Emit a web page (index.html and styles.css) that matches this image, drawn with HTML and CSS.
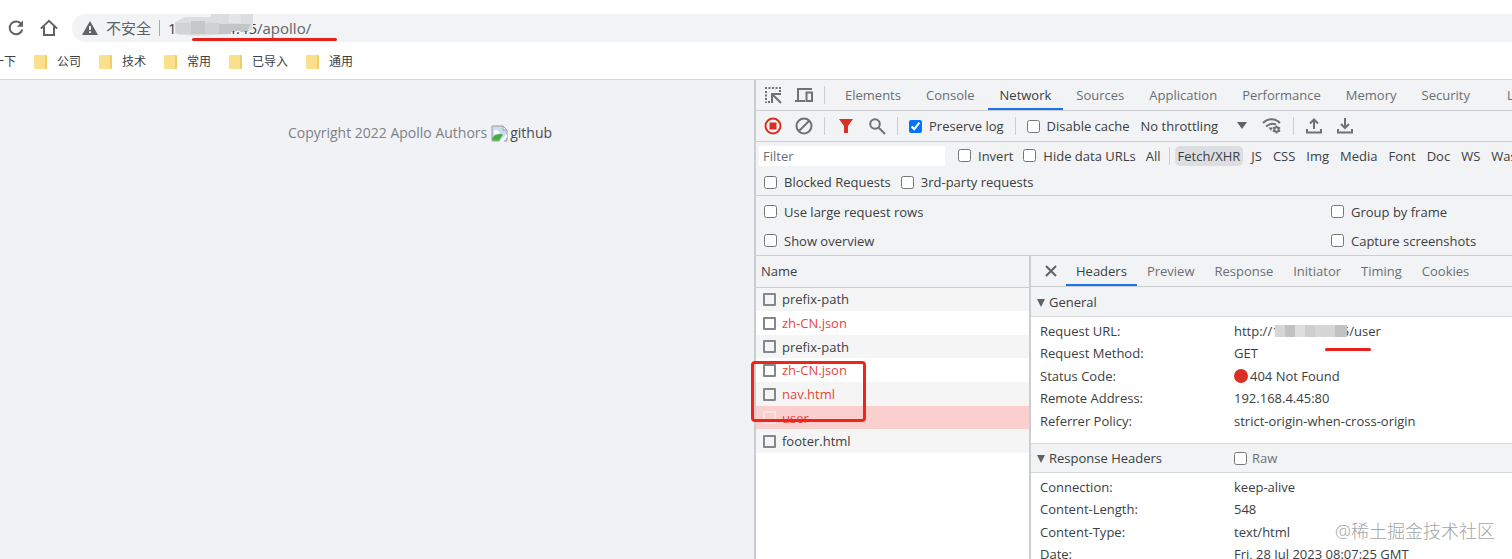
FILE: index.html
```
<!DOCTYPE html>
<html lang="zh-CN">

<head>
  <meta charset="UTF-8" />
  <meta name="viewport" content="width=device-width, initial-scale=1.0" />
  <title>Apollo</title>
  <link rel="stylesheet" href="styles.css">
</head>

<body>
  <header class="browser">
    <div class="address-row">
      <button class="nav-btn" aria-label="Reload">
        <svg width="20" height="20" viewBox="0 0 20 20" fill="none" stroke="#5f6368" stroke-width="2">
          <path d="M15.6 6.6A6.4 6.4 0 1 0 16.3 11.4" />
          <path d="M17 2.6v6.2h-6.2z" fill="#5f6368" stroke="none" />
        </svg>
      </button>
      <button class="nav-btn" aria-label="Home">
        <svg width="20" height="20" viewBox="0 0 20 20" fill="none" stroke="#5f6368" stroke-width="2">
          <path d="M1.8 10.6L10 2.8l8.2 7.8M5 8.6V17h10V8.6" />
        </svg>
      </button>
      <div class="omnibox">
        <svg width="16" height="14" viewBox="0 0 16 14">
          <path d="M8 0l8 14H0z" fill="#5f6368" />
          <path d="M7.1 5h1.8v4H7.1zM7.1 10.2h1.8V12H7.1z" fill="#fff" />
        </svg>
        <span class="insecure">不安全</span>
        <span class="omni-sep"></span>
        <span class="url"><span class="host">192.168.4.45</span>/apollo/
          <svg class="mosaic-url" width="78" height="22" viewBox="0 0 78 22">
            <path d="M0 8L10 3H36V0H78V15L72 17H56V20L20 22L0 20z" fill="#dcdddf" />
            <path d="M0 9h16v11H2z" fill="#d2d3d5" />
            <path d="M16 7h14v13H16z" fill="#c6c7c9" />
            <path d="M30 9h14v11H30z" fill="#d0d1d3" />
            <path d="M44 10h32l-4 7H56v3H44z" fill="#c4c5c7" />
            <path d="M54 0h12v9H54z" fill="#e4e5e6" />
          </svg>
          <span class="mark mark-url"></span>
        </span>
      </div>
    </div>
    <nav class="bookmarks">
      <a class="first" href="#">一下</a>
      <a href="#"><i class="folder"></i>公司</a>
      <a href="#"><i class="folder"></i>技术</a>
      <a href="#"><i class="folder"></i>常用</a>
      <a href="#"><i class="folder"></i>已导入</a>
      <a href="#"><i class="folder"></i>通用</a>
    </nav>
  </header>

  <div class="content">
    <main class="page">
      <p class="copyright">Copyright 2022 Apollo Authors
        <a href="#">
          <svg width="17" height="17" viewBox="0 0 17 17">
            <path d="M1 1h11l4 4v11H1z" fill="#c9dcf5" stroke="#9a9da1" />
            <path d="M12 1v4h4z" fill="#fff" stroke="#9a9da1" />
            <path d="M3 7a2 2 0 0 1 4-1 2 2 0 0 1 1 3H3z" fill="#fff" />
            <path d="M1.5 15.5v-3C5 9 8 8.500 12 9.500L8 15.500z" fill="#4caf3c" />
            <path d="M8 17l8-8v3l-4 5z" fill="#fff" />
          </svg>github</a>
      </p>
    </main>

    <section class="devtools">
      <div class="main-tabs">
        <button class="icon-btn" aria-label="Inspect">
          <svg width="18" height="18" viewBox="0 0 18 18" fill="none" stroke="#6e7276" stroke-width="2">
            <path d="M1 2h16" stroke-dasharray="2 1.500" />
            <path d="M2 5v12" stroke-dasharray="2 1.500" />
            <path d="M16 4v3M4 16h3" stroke-dasharray="2 1" />
            <path d="M8 17V8h9M8.500 8.500L17 17" />
          </svg>
        </button>
        <button class="icon-btn" aria-label="Device toolbar">
          <svg width="20" height="18" viewBox="0 0 20 18" fill="none" stroke="#6e7276" stroke-width="2">
            <path d="M18 3H4v11M1 15h10" />
            <path d="M12.500 6.500H18V15h-5.500z" />
          </svg>
        </button>
        <span class="sep"></span>
        <div class="tabs" role="tablist">
          <button class="tab" role="tab">Elements</button>
          <button class="tab" role="tab">Console</button>
          <button class="tab active" role="tab">Network</button>
          <button class="tab" role="tab">Sources</button>
          <button class="tab" role="tab">Application</button>
          <button class="tab" role="tab">Performance</button>
          <button class="tab" role="tab">Memory</button>
          <button class="tab" role="tab">Security</button>
          <button class="tab" role="tab">Lighthouse</button>
        </div>
      </div>

      <div class="toolbar">
        <button class="icon-btn" aria-label="Record">
          <svg width="18" height="18" viewBox="0 0 18 18">
            <circle cx="9" cy="9" r="7.500" fill="none" stroke="#d93025" stroke-width="2" />
            <path d="M5.500 5.500h7v7h-7z" fill="#d93025" />
          </svg>
        </button>
        <button class="icon-btn" aria-label="Clear">
          <svg width="18" height="18" viewBox="0 0 18 18" fill="none" stroke="#6e7276" stroke-width="2">
            <circle cx="9" cy="9" r="7.500" />
            <path d="M14 4L4 14" />
          </svg>
        </button>
        <span class="sep"></span>
        <button class="icon-btn" aria-label="Filter">
          <svg width="18" height="18" viewBox="0 0 18 18">
            <path d="M2 2h14l-5 7v7H7V9z" fill="#d93025" />
          </svg>
        </button>
        <button class="icon-btn" aria-label="Search">
          <svg width="18" height="18" viewBox="0 0 18 18" fill="none" stroke="#6e7276" stroke-width="2">
            <circle cx="7" cy="7" r="4.800" />
            <path d="M10.500 10.500L17 17" />
          </svg>
        </button>
        <span class="sep"></span>
        <label class="check"><input type="checkbox" checked>Preserve log</label>
        <span class="sep"></span>
        <label class="check"><input type="checkbox">Disable cache</label>
        <div class="throttle">
          <select aria-label="Throttling">
            <option>No throttling</option>
          </select>
          <svg width="10" height="7" viewBox="0 0 10 7">
            <path d="M0 0h10L5 7z" fill="#5f6368" />
          </svg>
        </div>
        <button class="icon-btn" aria-label="Network conditions">
          <svg width="20" height="18" viewBox="0 0 20 18" fill="none" stroke="#6e7276" stroke-width="2">
            <path d="M1 6C6 1 13 1 18 6M4 9.500C7.500 6.500 11 6 14 7.500" />
            <path d="M6.500 10.500h4L9 14z" fill="#6e7276" stroke="none" />
            <circle cx="14.500" cy="12.500" r="2.200" />
            <path d="M14.500 8.500v1.500M14.500 15v1.500M10.800 10.500l1.300.8M16.900 13.700l1.300.8M10.800 14.500l1.300-.8M16.900 11.300l1.300-.8" stroke-width="1.500" />
          </svg>
        </button>
        <span class="sep"></span>
        <button class="icon-btn" aria-label="Import">
          <svg width="18" height="18" viewBox="0 0 18 18" fill="none" stroke="#6e7276" stroke-width="2">
            <path d="M9 12V3M5 6.500L9 2.500l4 4M2 12v3.500h14V12" />
          </svg>
        </button>
        <button class="icon-btn" aria-label="Export">
          <svg width="18" height="18" viewBox="0 0 18 18" fill="none" stroke="#6e7276" stroke-width="2">
            <path d="M9 1v9.500M5 7l4 4 4-4M2 12v3.500h14V12" />
          </svg>
        </button>
      </div>

      <div class="filters">
        <div class="filter-row">
          <input class="filter-input" type="text" placeholder="Filter" aria-label="Filter">
          <label class="check"><input type="checkbox">Invert</label>
          <label class="check"><input type="checkbox">Hide data URLs</label>
          <div class="types">
            <button>All</button>
            <span class="sep"></span>
            <button class="selected">Fetch/XHR</button>
            <button>JS</button>
            <button>CSS</button>
            <button>Img</button>
            <button>Media</button>
            <button>Font</button>
            <button>Doc</button>
            <button>WS</button>
            <button>Wasm</button>
          </div>
        </div>
        <div class="filter-row second">
          <label class="check"><input type="checkbox">Blocked Requests</label>
          <label class="check"><input type="checkbox">3rd-party requests</label>
        </div>
      </div>

      <div class="settings">
        <label class="check"><input type="checkbox">Use large request rows</label>
        <label class="check"><input type="checkbox">Group by frame</label>
        <label class="check"><input type="checkbox">Show overview</label>
        <label class="check"><input type="checkbox">Capture screenshots</label>
      </div>

      <div class="panes">
        <div class="requests">
          <table>
            <thead>
              <tr><th>Name</th></tr>
            </thead>
            <tbody>
              <tr><td><label><input type="checkbox">prefix-path</label></td></tr>
              <tr class="error"><td><label><input type="checkbox">zh-CN.json</label></td></tr>
              <tr><td><label><input type="checkbox">prefix-path</label></td></tr>
              <tr class="error"><td><label><input type="checkbox">zh-CN.json</label></td></tr>
              <tr class="error"><td><label><input type="checkbox">nav.html</label></td></tr>
              <tr class="error current"><td><label><input type="checkbox">user</label></td></tr>
              <tr><td><label><input type="checkbox">footer.html</label></td></tr>
            </tbody>
          </table>
          <span class="mark-box"></span>
        </div>

        <div class="details">
          <div class="detail-tabs" role="tablist">
            <button class="close" aria-label="Close">
              <svg width="12" height="12" viewBox="0 0 12 12" stroke="#5f6368" stroke-width="2">
                <path d="M1 1l10 10M11 1L1 11" />
              </svg>
            </button>
            <button class="tab active" role="tab">Headers</button>
            <button class="tab" role="tab">Preview</button>
            <button class="tab" role="tab">Response</button>
            <button class="tab" role="tab">Initiator</button>
            <button class="tab" role="tab">Timing</button>
            <button class="tab" role="tab">Cookies</button>
          </div>

          <div class="section-head"><span class="title">General</span></div>
          <dl class="fields">
            <dt>Request URL:</dt>
            <dd class="request-url">http://192.168.4.45/user
              <svg class="mosaic-req" width="72" height="12" viewBox="0 0 72 12">
                <path d="M0 0h72v12H0z" fill="#d6d6d6" />
                <path d="M10 0h10v12H10zM60 0h12v12H60z" fill="#c2c2c2" />
                <path d="M20 0h10v12H20z" fill="#dedede" />
                <path d="M30 0h10v12H30z" fill="#cfcfcf" />
              </svg>
              <span class="mark mark-user"></span>
            </dd>
            <dt>Request Method:</dt>
            <dd>GET</dd>
            <dt>Status Code:</dt>
            <dd class="status"><i class="dot"></i>404 Not Found</dd>
            <dt>Remote Address:</dt>
            <dd>192.168.4.45:80</dd>
            <dt>Referrer Policy:</dt>
            <dd>strict-origin-when-cross-origin</dd>
          </dl>

          <div class="section-head">
            <span class="title">Response Headers</span>
            <label class="check raw"><input type="checkbox">Raw</label>
          </div>
          <dl class="fields">
            <dt>Connection:</dt>
            <dd>keep-alive</dd>
            <dt>Content-Length:</dt>
            <dd>548</dd>
            <dt>Content-Type:</dt>
            <dd>text/html</dd>
            <dt>Date:</dt>
            <dd>Fri, 28 Jul 2023 08:07:25 GMT</dd>
          </dl>
        </div>
      </div>
    </section>
  </div>

  <span class="watermark">@稀土掘金技术社区</span>
</body>

</html>
```

FILE: styles.css
```
* {
  box-sizing: border-box;
}

html,
body {
  height: 100%;
}

body {
  margin: 0;
  display: flex;
  flex-direction: column;
  position: relative;
  overflow: hidden;
  background: #fff;
  color: #3c4043;
  font: 13px/20px "Open Sans", "Noto Sans CJK SC", sans-serif;
}

button {
  padding: 0;
  border: 0;
  background: none;
  color: inherit;
  font: inherit;
  white-space: nowrap;
}

svg {
  display: block;
  flex: none;
}

a {
  color: inherit;
  text-decoration: none;
}

input[type="checkbox"] {
  width: 13px;
  height: 13px;
  margin: 0;
  flex: none;
}

/* Browser bar */
.browser {
  flex: none;
  padding-top: 14px;
  border-bottom: 1px solid #d5d7da;
}

.address-row {
  display: flex;
  align-items: center;
  gap: 13px;
  padding-left: 6px;
}

.omnibox {
  flex: 1;
  display: flex;
  align-items: center;
  gap: 8px;
  height: 28px;
  padding-left: 10px;
  border-radius: 14px 0 0 14px;
  background: #f1f3f4;
  color: #5f6368;
  font-size: 15px;
}

.omni-sep {
  width: 1px;
  height: 16px;
  background: #a5a8ac;
}

.url {
  position: relative;
}

.host {
  color: #3c4043;
}

.mosaic-url {
  position: absolute;
  left: 7px;
  top: -4px;
}

.mark {
  position: absolute;
  height: 3px;
  border-radius: 2px;
  background: #e8201a;
}

.mark-url {
  left: 24px;
  top: 20px;
  width: 145px;
}

.bookmarks {
  display: flex;
  align-items: center;
  gap: 18px;
  height: 37px;
  padding-top: 2px;
}

.bookmarks a {
  display: flex;
  align-items: center;
  gap: 10px;
  font-size: 12px;
}

.bookmarks .first {
  margin-left: -8px;
}

.folder {
  width: 13px;
  height: 14px;
  border-radius: 1px;
  border-right: 2px solid #f0cd69;
  background: #fbe08b;
}

/* Page */
.content {
  flex: 1;
  min-height: 0;
  display: flex;
}

.page {
  flex: 1;
  background: #f0f2f6;
}

.copyright {
  display: flex;
  justify-content: center;
  gap: 4px;
  margin: 43px 0 0;
  padding-left: 86px;
  color: #7f8184;
  font-size: 14px;
}

.copyright a {
  display: flex;
  align-items: center;
  gap: 2px;
  color: #4a4c50;
}

/* Devtools */
.devtools {
  width: calc(50% + 2px);
  display: flex;
  flex-direction: column;
  border-left: 2px solid #cbcdd1;
  background: #f1f3f4;
}

.main-tabs,
.toolbar {
  flex: none;
  display: flex;
  align-items: center;
  height: 31px;
  padding-left: 1px;
  overflow: hidden;
  border-bottom: 1px solid #cbcdd1;
}

.icon-btn {
  width: 31px;
  height: 30px;
  flex: none;
  display: flex;
  align-items: center;
  justify-content: center;
}

.sep {
  flex: none;
  width: 1px;
  height: 18px;
  background: #cbcdd1;
}

.main-tabs .sep,
.toolbar .sep {
  margin: 0 5px;
}

.tabs {
  display: flex;
  gap: 1px;
  padding-left: 3px;
}

.tab {
  height: 30px;
  padding: 2px 12px 0;
  border-bottom: 2px solid transparent;
  color: #6b6f73;
}

.tab.active {
  border-bottom-color: #1a73e8;
  color: #3c4043;
}

.tabs .tab:last-child {
  margin-left: 12px;
}

.check {
  display: flex;
  align-items: center;
  gap: 7px;
  white-space: nowrap;
}

.toolbar .check {
  padding: 0 6px;
}

.throttle {
  position: relative;
  margin: 0 8px 0 5px;
}

.throttle select {
  width: 108px;
  height: 24px;
  padding: 0;
  border: 0;
  appearance: none;
  background: none;
  color: inherit;
  font: inherit;
}

.throttle svg {
  position: absolute;
  right: 2px;
  top: 8px;
  pointer-events: none;
}

.filters,
.settings {
  flex: none;
  border-bottom: 1px solid #cbcdd1;
}

.filter-row {
  display: flex;
  align-items: center;
  gap: 10px;
  height: 27px;
  padding-left: 3px;
  overflow: hidden;
}

.filter-row.second {
  height: 26px;
  padding-left: 8px;
}

.filter-input {
  flex: none;
  width: 186px;
  height: 20px;
  margin-right: 3px;
  padding: 0 4px;
  border: 0;
  background: #fff;
  color: inherit;
  font: inherit;
}

.filter-input::placeholder {
  color: #6b6f73;
}

.types {
  display: flex;
  align-items: center;
  gap: 5px;
  margin-left: -3px;
}

.types button {
  padding: 0 3px;
  border-radius: 5px;
}

.types .selected {
  background: #dcdee1;
}

.settings {
  display: grid;
  grid-template-columns: 3fr 1fr;
  padding-top: 1px;
}

.settings .check {
  height: 29px;
  padding-left: 8px;
}

.panes {
  flex: 1;
  min-height: 0;
  display: flex;
}

/* Request list */
.requests {
  position: relative;
  flex: 0 0 275px;
  border-right: 2px solid #cbcdd1;
  background: #fff;
}

.requests table {
  width: 100%;
  border-collapse: collapse;
}

.requests th {
  height: 31px;
  padding: 0 5px;
  border-bottom: 1px solid #cbcdd1;
  background: #f1f3f4;
  font-weight: normal;
  text-align: left;
}

.requests td {
  height: 24px;
  padding: 0 7px;
}

.requests tr:nth-child(3n) td {
  height: 23px;
}

.requests tbody tr:nth-child(odd) {
  background: #f5f5f5;
}

.requests label {
  display: flex;
  align-items: center;
  gap: 6px;
}

.requests td input {
  appearance: none;
  border: 2px solid #85888b;
  border-radius: 1px;
}

.requests .error {
  color: #e8463a;
}

.requests tbody .current {
  background: #fccfcf;
}

.requests .current input {
  border-color: #fbe3e3;
}

.mark-box {
  position: absolute;
  left: -5px;
  top: 105px;
  width: 115px;
  height: 61px;
  border: 3px solid #f0241b;
  border-radius: 4px;
}

/* Request details */
.details {
  flex: 1;
  min-width: 0;
  overflow: hidden;
  background: #fff;
}

.detail-tabs {
  display: flex;
  height: 31px;
  border-bottom: 1px solid #cbcdd1;
  background: #f1f3f4;
}

.detail-tabs .tab {
  padding: 2px 10px 0;
}

.close {
  width: 35px;
  padding: 0 6px 0 14px;
}

.section-head {
  display: flex;
  align-items: center;
  height: 30px;
  border-bottom: 1px solid #d5d7da;
  background: #f1f3f4;
}

.fields + .section-head {
  border-top: 1px solid #d5d7da;
}

.section-head .title {
  width: 203px;
  padding-left: 6px;
}

.section-head .title::before {
  content: "";
  display: inline-block;
  margin-right: 4px;
  border: 4px solid transparent;
  border-top: 8px solid #5f6368;
  border-bottom: 0;
}

.raw {
  gap: 5px;
  color: #6b6f73;
}

.fields {
  display: grid;
  grid-template-columns: 194px 1fr;
  grid-auto-rows: 23px 22px;
  align-items: center;
  margin: 0;
  padding: 2px 0 11px 9px;
  white-space: nowrap;
}

.fields dd {
  margin: 0;
}

.request-url {
  position: relative;
}

.mosaic-req {
  position: absolute;
  left: 41px;
  top: 4px;
}

.mark-user {
  left: 91px;
  top: 27px;
  width: 46px;
}

.status {
  display: flex;
  align-items: center;
  gap: 2px;
}

.dot {
  width: 14px;
  height: 14px;
  border-radius: 50%;
  background: #d93025;
}

.watermark {
  position: absolute;
  right: 17px;
  bottom: 16px;
  color: #a3a5a8;
  font: 300 18px/24px "Open Sans", "Noto Sans CJK SC", sans-serif;
}
```
